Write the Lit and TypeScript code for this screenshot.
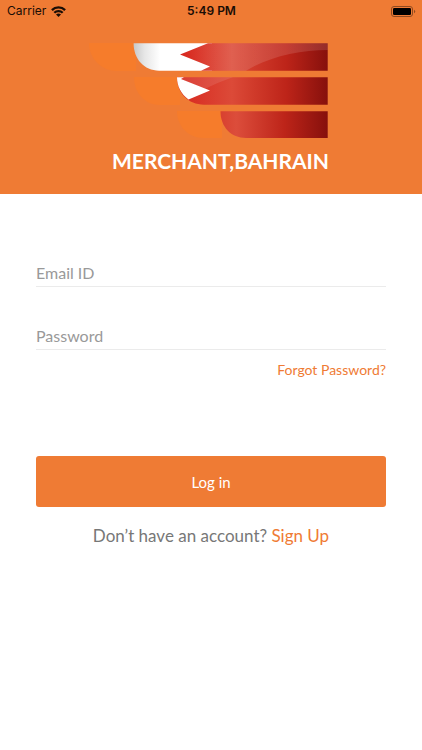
import { LitElement, html, css } from "lit";
import { customElement } from "lit/decorators.js";

@customElement("status-bar")
class StatusBar extends LitElement {
  static styles = css`
    :host {
      display: grid;
      grid-template-columns: 1fr auto 1fr;
      align-items: center;
      height: 22px;
      padding: 0 6px 0 7px;
      color: #1a0d05;
      font: 12px/22px Inter, sans-serif;
    }
    .carrier {
      display: flex;
      align-items: center;
      gap: 5px;
    }
    .time {
      font-weight: 600;
    }
    .battery {
      justify-self: end;
    }
    svg {
      display: block;
    }
  `;

  render() {
    return html`
      <div class="carrier">
        <span>Carrier</span>
        <svg width="15" height="11" viewBox="0 0 15 11" fill="none" stroke="#1a0d05" stroke-width="2.3">
          <path d="M0.900 4.100A9.400 9.400 0 0 1 14.100 4.100" />
          <path d="M3.300 6.800A6 6 0 0 1 11.700 6.800" />
          <path d="M7.500 11L5 8.600A3.600 3.600 0 0 1 10 8.600Z" fill="#1a0d05" stroke="none" />
        </svg>
      </div>
      <span class="time">5:49 PM</span>
      <svg class="battery" width="25" height="11" viewBox="0 0 25 11">
        <rect x="0.5" y="0.5" width="21" height="10" rx="2.5" fill="none" stroke="#8f4a20" />
        <rect x="2" y="2" width="18" height="7" rx="1.2" fill="#000" />
        <path d="M23 3.800a1.800 1.800 0 0 1 0 3.400z" fill="#8f4a20" />
      </svg>
    `;
  }
}

@customElement("brand-logo")
class BrandLogo extends LitElement {
  static styles = css`
    :host {
      display: block;
      width: 240px;
    }
    svg {
      display: block;
      width: 100%;
    }
    .name {
      margin: 0;
      text-align: right;
      white-space: nowrap;
      color: #fff;
      font: 700 21px/28px Lato, sans-serif;
    }
    .art {
      padding-bottom: 8px;
    }
  `;

  render() {
    return html`
      <svg class="art" viewBox="89 43 240 96" aria-hidden="true">
        <defs>
          <linearGradient id="red" gradientUnits="userSpaceOnUse" x1="180" y1="0" x2="328" y2="0">
            <stop offset="0" stop-color="#d8281f" />
            <stop offset="0.35" stop-color="#dc4a38" />
            <stop offset="0.5" stop-color="#d03a2a" />
            <stop offset="0.72" stop-color="#bd2419" />
            <stop offset="1" stop-color="#86100c" />
          </linearGradient>
          <linearGradient id="tail" gradientUnits="userSpaceOnUse" x1="220" y1="0" x2="328" y2="0">
            <stop offset="0" stop-color="#d8402f" />
            <stop offset="0.15" stop-color="#dc4d3b" />
            <stop offset="0.6" stop-color="#bd2419" />
            <stop offset="1" stop-color="#86100c" />
          </linearGradient>
          <linearGradient id="white" gradientUnits="userSpaceOnUse" x1="134" y1="0" x2="160" y2="0">
            <stop offset="0" stop-color="#c9c9c9" />
            <stop offset="0.4" stop-color="#e6e6e6" />
            <stop offset="1" stop-color="#fff" />
          </linearGradient>
          <linearGradient id="shine" gradientUnits="userSpaceOnUse" x1="190" y1="0" x2="328" y2="0">
            <stop offset="0" stop-color="#fff" stop-opacity="0" />
            <stop offset="0.3" stop-color="#fff" stop-opacity="0.12" />
            <stop offset="1" stop-color="#fff" stop-opacity="0.12" />
          </linearGradient>
        </defs>
        <g fill="#f67c2b">
          <path d="M89 43H136V71H117C102 71 89 59 89 43Z" />
          <path d="M134 77H180V105H160C145 105 134 93 134 77Z" />
          <path d="M177 111H222V138H204C189 138 177 127 177 111Z" />
        </g>
        <path d="M133.600 43.300H212V70.700H159C144 70.700 133.600 59 133.600 43.300Z" fill="url(#white)" />
        <path d="M208 43.300H327.700V70.700H201L210 66.500L180 54.500Z" fill="url(#red)" />
        <path d="M208 43.300H327.700V50C300 50 268 57 246 70.700H201L210 66.500L180 54.500Z" fill="url(#shine)" />
        <path d="M177 77.300H327.700V104.700H204C188 104.700 177 93 177 77.300Z" fill="url(#red)" />
        <path d="M184 77.300H233C219 82 211 86 205 89L181 79Z" fill="#fff" fill-opacity="0.1" />
        <path d="M177 77.300H184L181 79L210 90.500L188.500 99.500C181 94 177 86 177 77.300Z" fill="#fff" />
        <path d="M220.500 111.300H327.700V138H246C231 138 220.500 127 220.500 111.300Z" fill="url(#tail)" />
      </svg>
      <h1 class="name">MERCHANT,BAHRAIN</h1>
    `;
  }
}

@customElement("app-root")
class AppRoot extends LitElement {
  static styles = css`
    :host {
      display: block;
      min-height: 100vh;
      background: #fff;
      color: #777;
      font-family: Lato, sans-serif;
    }
    header {
      background: #ef7b34;
    }
    .brand {
      display: flex;
      justify-content: center;
      padding: 21px 4px 19px 0;
    }
    form {
      display: flex;
      flex-direction: column;
      padding: 65px 36px 0;
    }
    input {
      box-sizing: border-box;
      width: 100%;
      height: 28px;
      margin-bottom: 35px;
      padding: 0;
      border: 0;
      border-bottom: 1px solid #ebebeb;
      border-radius: 0;
      outline: 0;
      background: none;
      color: #555;
      font: 16px/26px Lato, sans-serif;
    }
    .last {
      margin-bottom: 10px;
    }
    input::placeholder {
      color: #999;
      opacity: 1;
    }
    a {
      color: #ef7b34;
      text-decoration: none;
    }
    .forgot {
      align-self: flex-end;
      font-size: 14px;
      line-height: 20px;
    }
    button {
      height: 51px;
      margin-top: 76px;
      border: 0;
      border-radius: 3px;
      background: #ef7b34;
      color: #fff;
      font: 15px/20px Lato, sans-serif;
    }
    .signup {
      margin: 17px 0 0;
      text-align: center;
      font-size: 17px;
      line-height: 24px;
    }
  `;

  render() {
    return html`
      <header>
        <status-bar></status-bar>
        <div class="brand"><brand-logo></brand-logo></div>
      </header>
      <form @submit=${(e: Event) => e.preventDefault()}>
        <input type="email" placeholder="Email ID" aria-label="Email ID" />
        <input class="last" type="password" placeholder="Password" aria-label="Password" />
        <a class="forgot" href="#forgot">Forgot Password?</a>
        <button type="submit">Log in</button>
        <p class="signup">Don’t have an account? <a href="#signup">Sign Up</a></p>
      </form>
    `;
  }
}
